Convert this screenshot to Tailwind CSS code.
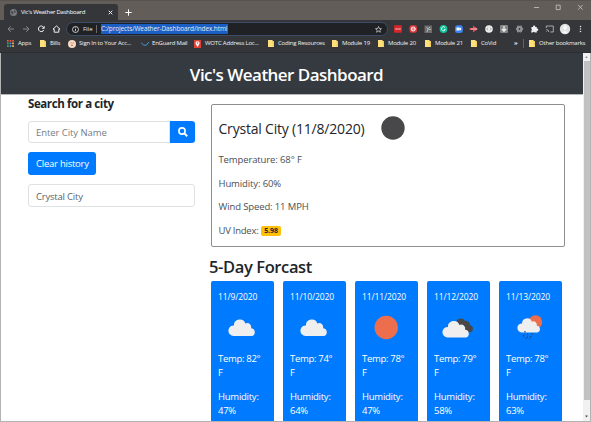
<!DOCTYPE html>
<html lang="en">
<head>
<meta charset="utf-8">
<title>Vic's Weather Dashboard</title>
<script src="https://cdn.jsdelivr.net/npm/@tailwindcss/browser@4"></script>
</head>
<body class="w-[591px] h-[422px] overflow-hidden bg-white font-['Open_Sans','Noto_Sans',sans-serif] text-[#212529]">
<svg class="hidden">
  <symbol id="folder" viewBox="0 0 6 7"><path d="M0 0h4.6v1.2H6V7H0z" fill="#ffe07a"/><path d="M4.6 1.2H6V7H4.6z" fill="#f2cf60"/></symbol>
  <symbol id="cloud" viewBox="0 0 28 18"><path d="M5.5 17.5a5.3 5.3 0 0 1 .4-10.6A5.9 5.9 0 0 1 17.4 5a4 4 0 0 1 5.7 4.7 4 4 0 0 1 .9 7.8z"/></symbol>
</svg>
<div class="flex flex-col w-[591px] h-[422px]">
  <!-- Tab strip -->
  <div class="flex h-[20px] shrink-0 bg-[#625d59] border-t border-[#575350] text-white">
    <div class="flex items-center ml-1 mt-[3px] h-4 w-[114px] rounded-t-[3px] bg-[#35363a] pl-[6px]">
      <svg class="w-[7px] h-[7px] shrink-0" viewBox="0 0 14 14"><circle cx="7" cy="7" r="7" fill="#777b80"/><path d="M2 4l4 1 1 3-2 3-3-3zM8 2l4 3-2 3-2-2z" fill="#46494d"/></svg>
      <span class="ml-[4px] w-[63px] whitespace-nowrap text-[6px] tracking-[-0.26px]">Vic's Weather Dashboard</span>
      <svg class="ml-[24px] w-[5px] h-[5px] shrink-0" viewBox="0 0 5 5" stroke="#eee"><path d="M.7.7l3.6 3.6M4.3.7L.7 4.3"/></svg>
    </div>
    <svg class="mt-[8px] ml-[7px] w-[7px] h-[7px]" viewBox="0 0 7 7" stroke="#fff"><path d="M3.5.3v6.4M.3 3.5h6.4"/></svg>
    <svg class="ml-auto mr-[8px] mt-[3px] w-[50px] h-[7px]" viewBox="0 0 50 7" fill="none" stroke="#c9c7c5" stroke-width=".8"><path d="M1 3.5h5M23.2 1.2h4v4.4h-4zM45.1.9l4.6 4.8M49.7.9l-4.6 4.8"/></svg>
  </div>
  <!-- Toolbar -->
  <div class="flex items-center h-[18px] shrink-0 bg-[#35363a]">
    <svg class="w-[66px] h-[18px] shrink-0" viewBox="0 0 66 18" fill="none" stroke-width="1"><path d="M14 9H8.2M10.8 6.2L8 9l2.800 2.800M23 9h5.800M26.200 6.200L29 9l-2.800 2.800" stroke="#85878a"/><path d="M43.600 7.300a2.800 2.800 0 1 0 .2 2.700" stroke="#f1f1f1"/><path d="M44.600 5.800v3h-3z" fill="#f1f1f1"/><path d="M53 9.200l3.500-3.300L60 9.200h-1.200v3h-4.600v-3z" stroke="#f1f1f1"/></svg>
    <div class="flex items-center w-[322px] h-[14px] shrink-0 rounded-full border border-[#3b4c66] bg-[#202124] text-[6px] text-[#e8eaed] whitespace-nowrap">
      <svg class="ml-[5px] w-[7px] h-[7px] shrink-0" viewBox="0 0 7 7" fill="none" stroke="#e8eaed" stroke-width=".8"><circle cx="3.500" cy="3.500" r="3"/><path d="M3.500 3v2.200M3.500 1.500v.8"/></svg>
      <span class="ml-[4px] w-[13px]">File</span><span class="w-px h-2 bg-[#696b70] mr-[4px]"></span>
      <span class="w-[127px] h-[10px] leading-[9px] bg-[#1b5fc4] text-[6.5px] tracking-[-0.12px]">C:/projects/Weather-Dashboard/index.html</span>
      <svg class="ml-auto mr-[5px] w-[7px] h-[7px]" viewBox="0 0 14 14" fill="none" stroke="#dadce0" stroke-width="1.400"><path d="M7 1l1.700 4.100 4.300.3-3.300 2.800 1 4.300L7 10.200l-3.700 2.300 1-4.300L1 5.400l4.300-.3z"/></svg>
    </div>
    <svg class="w-[203px] h-[18px] shrink-0" viewBox="388 20 203 18">
      <rect x="394" y="25.300" width="8" height="7.500" rx="1" fill="#d3262b"/><path d="M395.500 29h1.300M397.400 29h1.300M399.300 29h1.300" stroke="#fff"/>
      <rect x="409.500" y="25.300" width="7.500" height="7.500" rx="2" fill="#d93a3d"/><circle cx="413.200" cy="29" r="2" fill="none" stroke="#fff"/><path d="M411 29h4.500" stroke="#fff" stroke-width=".8"/>
      <rect x="424.500" y="25.500" width="7.500" height="7.500" fill="#6d6d6d"/><path d="M426.500 27l1.500 2 2-2M428 29l-1 3M429 29.500h2" stroke="#ccc" fill="none" stroke-width=".8"/>
      <circle cx="443.500" cy="29" r="3.900" fill="#15c39a"/><path d="M445 27.500a2 2 0 1 0 .3 2H444" stroke="#fff" fill="none" stroke-width=".8"/>
      <rect x="455" y="25.200" width="7.800" height="7.800" rx="2.500" fill="#3d83f5"/><path d="M456.500 27.600h3v1l1.600-1v3l-1.600-1v1h-3z" fill="#fff"/>
      <path d="M469.500 28h3.500v-2.500l5 3.500-5 3.500V30h-3.500z" fill="#db4b5a"/><path d="M471 29h6" stroke="#fff" stroke-width=".7"/>
      <circle cx="489" cy="29" r="3.800" fill="#eee"/><path d="M487.800 27.500l-1 1.500 1 1.500M490.200 27.500l1 1.500-1 1.500" fill="none" stroke="#777" stroke-width=".6"/>
      <rect x="500" y="25" width="8" height="8" rx="1" fill="#858585"/><path d="M504 26v5M502 29l2 2.300 2-2.300" fill="none" stroke="#eee" stroke-width="1.300"/>
      <g fill="none" stroke="#a5a7aa" stroke-width=".8"><ellipse cx="519.500" cy="29" rx="3.500" ry="1.400"/><ellipse cx="519.500" cy="29" rx="3.500" ry="1.400" transform="rotate(60 519.500 29)"/><ellipse cx="519.500" cy="29" rx="3.500" ry="1.400" transform="rotate(120 519.500 29)"/></g>
      <path d="M531.500 27h1.600a1.100 1.100 0 1 1 2.100 0h1.600v1.700a1.100 1.100 0 1 1 0 2.100v1.700h-2a1.100 1.100 0 0 0-2 0h-1.500v-1.800a1.100 1.100 0 0 0 0-2z" fill="#f0f0f0"/>
      <path d="M546.300 28v-2h7v6h-3M546.300 29.500a2.500 2.500 0 0 1 2.500 2.500M546.300 31.500h.6" fill="none" stroke="#c2c4c7" stroke-width=".8"/>
      <circle cx="565" cy="29" r="5.200" fill="#e2e2e2"/><ellipse cx="565" cy="27.600" rx="1.800" ry="2.400" fill="#f8f8f8"/><path d="M562 33q3-4 6 0z" fill="#f8f8f8"/>
      <g fill="#e8eaed"><circle cx="580.500" cy="26.400" r=".75"/><circle cx="580.500" cy="29" r=".75"/><circle cx="580.500" cy="31.600" r=".75"/></g>
    </svg>
  </div>
  <!-- Bookmarks -->
  <div class="flex items-center h-[15px] pb-[3px] shrink-0 bg-[#35363a] border-b border-[#2b2c2e] text-[6px] tracking-[-0.2px] text-[#f1f3f4] whitespace-nowrap pl-[7px] overflow-hidden">
    <div class="flex items-center w-[33px] shrink-0"><svg class="w-[7px] h-[7px] mr-1" viewBox="0 0 7 7"><path d="M0 0h1.700v1.700H0zM2.600 0h1.700v1.700H2.600zM5.200 0h1.700v1.700H5.200z" fill="#e35a45"/><path d="M0 2.600h1.700v1.700H0zM0 5.200h1.700v1.700H0z" fill="#43a65c"/><path d="M2.600 2.600h1.700v1.700H2.600zM2.600 5.200h1.700v1.700H2.600z" fill="#4f8ef0"/><path d="M5.200 2.600h1.700v1.700H5.200zM5.200 5.200h1.700v1.700H5.200z" fill="#efbd3f"/></svg>Apps</div>
    <div class="flex items-center w-[28px] shrink-0"><svg class="w-[6px] h-[7px] mr-1"><use href="#folder"/></svg>Bills</div>
    <div class="flex items-center w-[73px] shrink-0"><svg class="w-[8px] h-[8px] mr-[3px]" viewBox="0 0 8 8"><circle cx="4" cy="4" r="4" fill="#f7d9c4"/><path d="M2.500 3h1M4.600 3h1M3 5.300h2" stroke="#b96d4e"/></svg>Sign In to Your Acc...</div>
    <div class="flex items-center w-[53px] shrink-0"><svg class="w-[8px] h-[7px] mr-[3px]" viewBox="0 0 8 7" fill="none"><path d="M.2 2.500l2.300 2.700h3L7.800 2" stroke="#4593cf"/></svg>EnGuard Mail</div>
    <div class="flex items-center w-[74px] shrink-0"><svg class="w-[7px] h-[8px] mr-1" viewBox="0 0 7 8"><path d="M0 0h7v8H0z" fill="#dc4238"/><path d="M3.500 7L1.700 4a2 2 0 1 1 3.600 0z" fill="#fff"/><circle cx="3.500" cy="3" r=".8" fill="#dc4238"/></svg>WOTC Address Loc...</div>
    <div class="flex items-center w-[64px] shrink-0"><svg class="w-[6px] h-[7px] mr-1"><use href="#folder"/></svg>Coding Resources</div>
    <div class="flex items-center w-[46px] shrink-0"><svg class="w-[6px] h-[7px] mr-1"><use href="#folder"/></svg>Module 19</div>
    <div class="flex items-center w-[47px] shrink-0"><svg class="w-[6px] h-[7px] mr-1"><use href="#folder"/></svg>Module 20</div>
    <div class="flex items-center w-[46px] shrink-0"><svg class="w-[6px] h-[7px] mr-1"><use href="#folder"/></svg>Module 21</div>
    <div class="flex items-center w-[43px] shrink-0"><svg class="w-[6px] h-[7px] mr-1"><use href="#folder"/></svg>CoVid</div>
    <div class="w-[9px] shrink-0 font-bold">»</div>
    <div class="flex items-center shrink-0 border-l border-[#606266] pl-[5px]"><svg class="w-[6px] h-[7px] mr-1"><use href="#folder"/></svg>Other bookmarks</div>
  </div>
  <!-- Viewport -->
  <div class="flex flex-1 min-h-0 border-l border-b border-[#b3b3b3]">
    <div class="flex-1 min-w-0 overflow-hidden">
      <header class="h-[42px] bg-[#343a40] border-b border-[#b5b8ba] text-center text-white text-[17px] leading-[43px] font-semibold"><h1 class="-ml-[11px] tracking-[-0.53px]">Vic's Weather Dashboard</h1></header>
      <main class="flex pl-[27px]">
        <aside class="w-[167px] mr-[14px] shrink-0">
          <h2 class="text-[11.5px] leading-[18px] font-bold tracking-[-0.4px]">Search for a city</h2>
          <div class="flex mt-[8px] h-[22px] text-[9.5px]">
            <div class="flex-1 border border-[#dfe2e5] rounded-l-[3px] pl-[7px] leading-[22px] tracking-[-0.07px] text-[#757d84]">Enter City Name</div>
            <div class="w-[25px] rounded-r-[3px] bg-[#007bff] flex items-center justify-center"><svg class="w-[10px] h-[10px]" viewBox="0 0 10 10" fill="none" stroke="#fff"><circle cx="4" cy="4" r="3.100" stroke-width="1.600"/><path d="M6.400 6.400L9.200 9.200" stroke-width="2"/></svg></div>
          </div>
          <div class="mt-[9px] w-[68px] h-[23px] rounded-[3px] bg-[#007bff] text-white text-[9.5px] leading-[23px] tracking-[-0.24px] pl-[8px] whitespace-nowrap">Clear history</div>
          <div class="mt-[9px] h-[23px] rounded-[3px] border border-[#dfe2e5] pl-[7px] text-[9.5px] leading-[23px] tracking-[-0.2px] text-[#5b636a]">Crystal City</div>
        </aside>
        <div>
          <section class="ml-[2px] mt-[9px] w-[354px] h-[143px] border border-[#8c8f92] rounded-[2px] pl-[6.5px] text-[9.5px] tracking-[-0.12px] text-[#4b4f53]">
            <div class="flex items-center h-[46px] mb-px text-[#212529]"><span class="w-[162px] text-[14px] tracking-[-0.2px] whitespace-nowrap">Crystal City (11/8/2020)</span><svg class="w-[24px] h-[24px]" viewBox="0 0 24 24"><circle cx="12" cy="12" r="11.700" fill="#48484a"/></svg></div>
            <p class="h-[23.7px] leading-[16px]">Temperature: 68° F</p>
            <p class="h-[23.7px] leading-[16px]">Humidity: 60%</p>
            <p class="h-[23.7px] leading-[16px]">Wind Speed: 11 MPH</p>
            <p class="flex items-center h-[16px] whitespace-nowrap"><span class="w-[42.5px] tracking-[-0.25px]">UV Index:</span><b class="w-[20px] h-[10px] rounded-[2px] bg-[#ffc107] text-center text-[7px] leading-[10px] text-[#212529]">5.98</b></p>
          </section>
          <h2 class="mt-[7px] h-[26px] text-[16.5px] leading-[26px] font-semibold tracking-[-0.38px]">5-Day Forcast</h2>
          <section class="flex gap-[9px] ml-[2px] mt-px text-white text-[9.5px] leading-[14px]">
            <article class="w-[63px] h-[160px] rounded-[2px] bg-[#007bff] pl-[7px] pt-[9px] whitespace-nowrap">
              <p class="text-[8.5px] tracking-[-0.1px]">11/9/2020</p>
              <svg class="mt-[6px] w-[50px] h-[34px]" viewBox="0 0 50 34" fill="#efefef"><use href="#cloud" x="10" y="8.500" width="28" height="18"/></svg>
              <p class="mt-[8px] tracking-[-0.3px]">Temp: 82°<br>F</p><p class="mt-[10px] tracking-[-0.25px]">Humidity:<br>47%</p>
            </article>
            <article class="w-[63px] h-[160px] rounded-[2px] bg-[#007bff] pl-[7px] pt-[9px] whitespace-nowrap">
              <p class="text-[8.5px] tracking-[-0.1px]">11/10/2020</p>
              <svg class="mt-[6px] w-[50px] h-[34px]" viewBox="0 0 50 34" fill="#efefef"><use href="#cloud" x="10" y="8.500" width="28" height="18"/></svg>
              <p class="mt-[8px] tracking-[-0.3px]">Temp: 74°<br>F</p><p class="mt-[10px] tracking-[-0.25px]">Humidity:<br>64%</p>
            </article>
            <article class="w-[63px] h-[160px] rounded-[2px] bg-[#007bff] pl-[7px] pt-[9px] whitespace-nowrap">
              <p class="text-[8.5px] tracking-[-0.1px]">11/11/2020</p>
              <svg class="mt-[6px] w-[50px] h-[34px]" viewBox="0 0 50 34"><circle cx="24.200" cy="17.500" r="11.700" fill="#ec6e4c"/></svg>
              <p class="mt-[8px] tracking-[-0.3px]">Temp: 78°<br>F</p><p class="mt-[10px] tracking-[-0.25px]">Humidity:<br>47%</p>
            </article>
            <article class="w-[63px] h-[160px] rounded-[2px] bg-[#007bff] pl-[7px] pt-[9px] whitespace-nowrap">
              <p class="text-[8.5px] tracking-[-0.1px]">11/12/2020</p>
              <svg class="mt-[6px] w-[50px] h-[34px]" viewBox="0 0 50 34"><path d="M22 12.500a5 5 0 0 1 9.200-1.600 3.800 3.800 0 0 1 4.600 4.200 3.700 3.700 0 0 1 .5 7.200H30z" fill="#48484a"/><use href="#cloud" x="8" y="10" width="28" height="18" fill="#efefef"/></svg>
              <p class="mt-[8px] tracking-[-0.3px]">Temp: 79°<br>F</p><p class="mt-[10px] tracking-[-0.25px]">Humidity:<br>58%</p>
            </article>
            <article class="w-[63px] h-[160px] rounded-[2px] bg-[#007bff] pl-[7px] pt-[9px] whitespace-nowrap">
              <p class="text-[8.5px] tracking-[-0.1px]">11/13/2020</p>
              <svg class="mt-[6px] w-[50px] h-[34px]" viewBox="0 0 50 34"><circle cx="29.500" cy="12" r="6.700" fill="#ec6e4c"/><use href="#cloud" x="11" y="7.500" width="24" height="15.400" fill="#efefef"/><path d="M19 21l-.2 1.500M18 25l-.8 1.600M21.700 23.500l-.5 1.300M26.500 23.500l-.5 1M21.700 26.500l-.8 1.500M25 26l-.6 1.300M23.800 28.500l-.4 .8M20 28l-.3 .8" stroke="#34405a" stroke-width="1.200"/></svg>
              <p class="mt-[8px] tracking-[-0.3px]">Temp: 78°<br>F</p><p class="mt-[10px] tracking-[-0.25px]">Humidity:<br>63%</p>
            </article>
          </section>
        </div>
      </main>
    </div>
    <!-- Scrollbar -->
    <div class="w-[8px] shrink-0 flex flex-col items-center bg-[#f1f1f1] border-r border-[#b3b3b3]">
      <svg class="w-[7px] h-[8px]" viewBox="0 0 7 8"><path d="M2 5l1.500-2L5 5z" fill="#999"/></svg>
      <div class="w-[6px] h-[339px] bg-[#c1c1c1]"></div>
      <svg class="mt-auto w-[7px] h-[9px]" viewBox="0 0 7 9"><path d="M2 3.500l1.500 2 1.500-2z" fill="#505050"/></svg>
    </div>
  </div>
</div>
</body>
</html>
